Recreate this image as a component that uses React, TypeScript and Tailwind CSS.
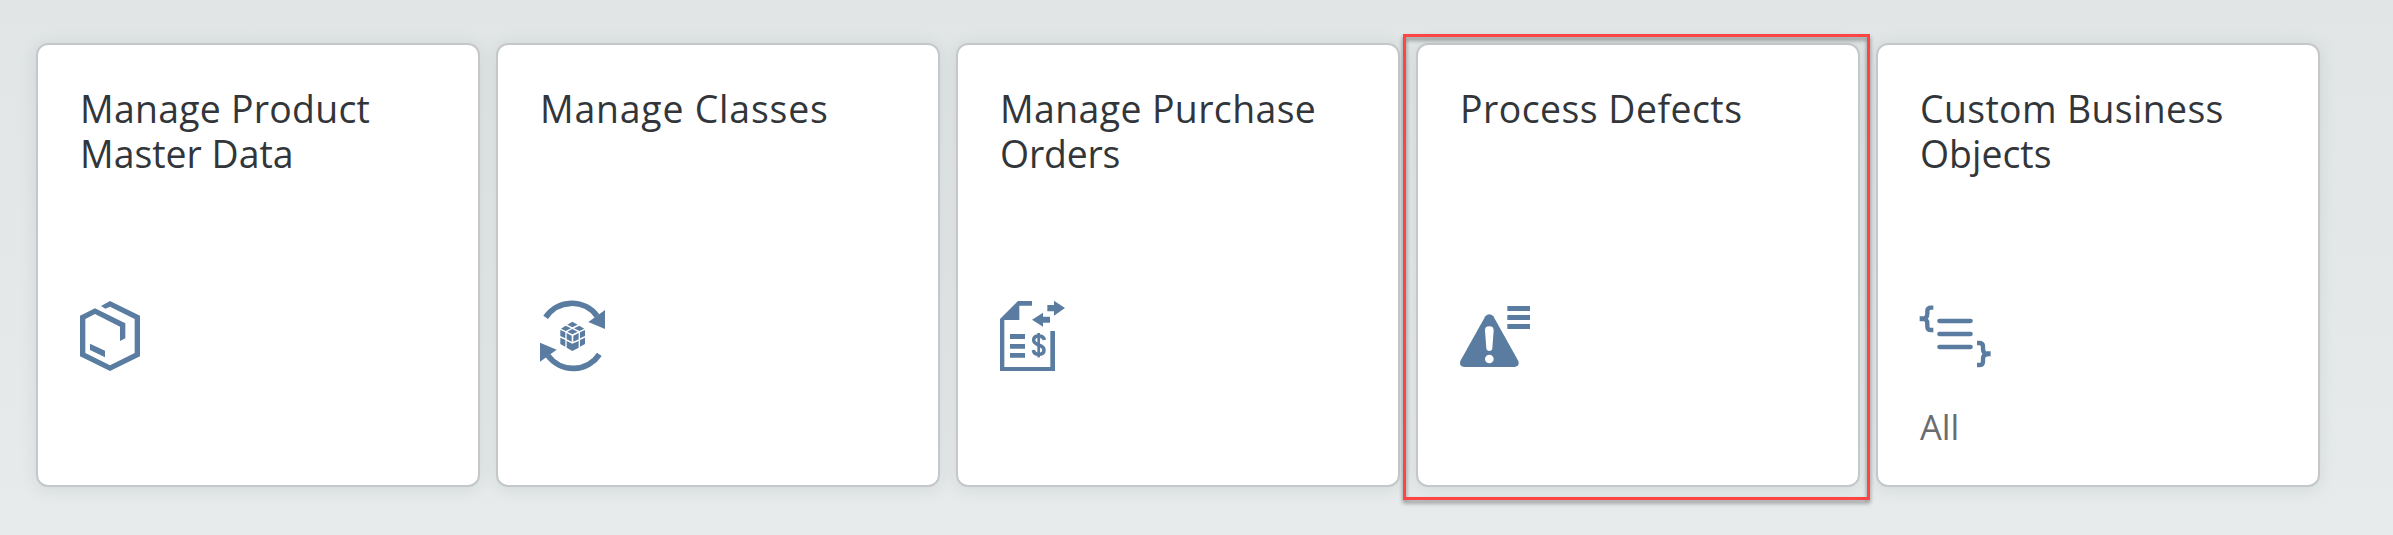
import type { ReactNode } from "react";

const ICON = "#5a7ca0";

function ProductIcon() {
  return (
    <svg className="-ml-[5px]" width="100" height="100" viewBox="0 0 300 300" fill={ICON}>
      <path d="M123 63 L150 48 L240 92 V214 L150 258 L60 214 V92 L105 70 L196 115 V160 L180 168 V125 L105 87 L76 102 V204 L150 241 L224 204 V102 L150 65 L136 71 Z" />
      <path d="M90 176 L135 197 V217 L90 195 Z" />
    </svg>
  );
}

function ClassesIcon() {
  return (
    <svg width="100" height="100" viewBox="0 0 300 300" fill={ICON}>
      <path d="M62 97 A94 94 0 0 1 216 93" fill="none" stroke={ICON} strokeWidth="17" />
      <path d="M240 75 V132 L190 111 Z" />
      <path d="M223 208 A94 94 0 0 1 69 212" fill="none" stroke={ICON} strokeWidth="17" />
      <path d="M45 173 V230 L95 194 Z" />
      <path d="M142 110 L158 119 L142 127 L127 119 Z" />
      <path d="M122 122 L138 130 L122 138 L108 131 Z" />
      <path d="M163 122 L178 131 L163 138 L147 130 Z" />
      <path d="M142 132 L158 140 L142 148 L127 140 Z" />
      <path d="M106 135 L121 142 V160 L106 153 Z" />
      <path d="M180 135 L165 142 V160 L180 153 Z" />
      <path d="M125 144 L140 152 V170 L125 163 Z" />
      <path d="M161 144 L145 152 V170 L161 163 Z" />
      <path d="M106 158 L121 165 V185 L106 177 Z" />
      <path d="M180 158 L165 165 V185 L180 177 Z" />
      <path d="M125 168 L142 176 L161 168 V188 L142 198 L125 188 Z" />
    </svg>
  );
}

function PurchaseIcon() {
  return (
    <svg width="100" height="100" viewBox="0 0 300 300" fill={ICON}>
      <path d="M141 48 V62 H103 V105 H58 V246 H196 V138 H210 V258 H45 V102 L99 48 Z" />
      <path d="M187 60 H207 V47 L240 69 L207 92 V79 H187 Z" />
      <path d="M195 95 H174 V83 L141 104 L174 125 V113 H195 Z" />
      <path d="M75 147 H120 V162 H75 Z M75 177 H120 V191 H75 Z M75 204 H120 V218 H75 Z" />
      <path d="M161 144 V217" stroke={ICON} strokeWidth="8" />
      <path
        d="M178 165 C176 155 170 153 161 153 C151 153 146 158 146 165 C146 174 153 177 161 180 C171 183 177 187 177 195 C177 204 170 208 161 208 C151 208 146 203 145 195"
        fill="none"
        stroke={ICON}
        strokeWidth="10.5"
      />
    </svg>
  );
}

function DefectsIcon() {
  return (
    <svg width="100" height="100" viewBox="0 0 300 300" fill={ICON}>
      <path d="M121 94 Q133 81 145 94 L220 228 Q225 244 209 246 H57 Q41 244 46 228 Z" />
      <path d="M133 124 Q147 124 146 137 L142 190 Q141 198 133 198 Q125 198 124 190 L120 137 Q119 124 133 124 Z" fill="#fff" />
      <circle cx="133" cy="222" r="13" fill="#fff" />
      <path d="M187 63 H255 V78 H187 Z M187 90 H255 V105 H187 Z M187 117 H255 V132 H187 Z" />
    </svg>
  );
}

function ObjectsIcon() {
  return (
    <svg width="100" height="100" viewBox="0 0 300 300" fill="none" stroke={ICON} strokeWidth="13">
      <path d="M85 68 H79 Q67 68 67 78 V86 Q67 101 51 101 Q67 101 67 116 V125 Q67 135 79 135 H85" />
      <path d="M216 174 H222 Q234 174 234 184 V192 Q234 207 250 207 Q234 207 234 222 V230 Q234 240 222 240 H216" />
      <path d="M44 94 H55 V109 H44 Z M246 199 H257 V214 H246 Z" fill={ICON} stroke="none" />
      <path d="M103 108 H197 M103 147 H197 M103 186 H197" strokeLinecap="round" />
    </svg>
  );
}

function Tile({ title, icon, footer }: { title: ReactNode; icon: ReactNode; footer?: string }) {
  return (
    <section className="flex h-[444px] w-[444px] shrink-0 flex-col rounded-[12px] border-2 border-[#c4c8ca] bg-white pl-[42px] shadow-[0_2px_16px_rgba(90,105,110,0.15)]">
      <h2 className="mt-[41px] h-[199px] whitespace-nowrap text-[37.4px] leading-[45px] text-[#32363a]">{title}</h2>
      <div className="-ml-[15px] h-[100px]">{icon}</div>
      {footer && <p className="mt-[18px] text-[34.5px] leading-[47px] text-[#6a6d70]">{footer}</p>}
    </section>
  );
}

export default function App() {
  return (
    <main className="relative flex h-[535px] w-[2393px] gap-4 overflow-hidden bg-linear-to-b from-[#e1e5e5] to-[#e8ebec] pl-9 pt-[43px] font-['Open_Sans',sans-serif]">
      <Tile
        title={
          <>
            <span className="block tracking-[0.27px]">Manage Product</span>
            <span className="block">Master Data</span>
          </>
        }
        icon={<ProductIcon />}
      />
      <Tile title={<span className="block tracking-[0.8px]">Manage Classes</span>} icon={<ClassesIcon />} />
      <Tile
        title={
          <>
            <span className="block tracking-[0.4px]">Manage Purchase</span>
            <span className="block tracking-[-0.2px]">Orders</span>
          </>
        }
        icon={<PurchaseIcon />}
      />
      <Tile title={<span className="block tracking-[0.48px]">Process Defects</span>} icon={<DefectsIcon />} />
      <Tile
        title={
          <>
            <span className="block tracking-[0.36px]">Custom Business</span>
            <span className="block">Objects</span>
          </>
        }
        icon={<ObjectsIcon />}
        footer="All"
      />
      <div className="pointer-events-none absolute left-[1403px] top-[34px] h-[466px] w-[467px] border-3 border-[#ff4444] drop-shadow-[0_3px_2px_rgba(0,0,0,0.45)]" />
    </main>
  );
}
